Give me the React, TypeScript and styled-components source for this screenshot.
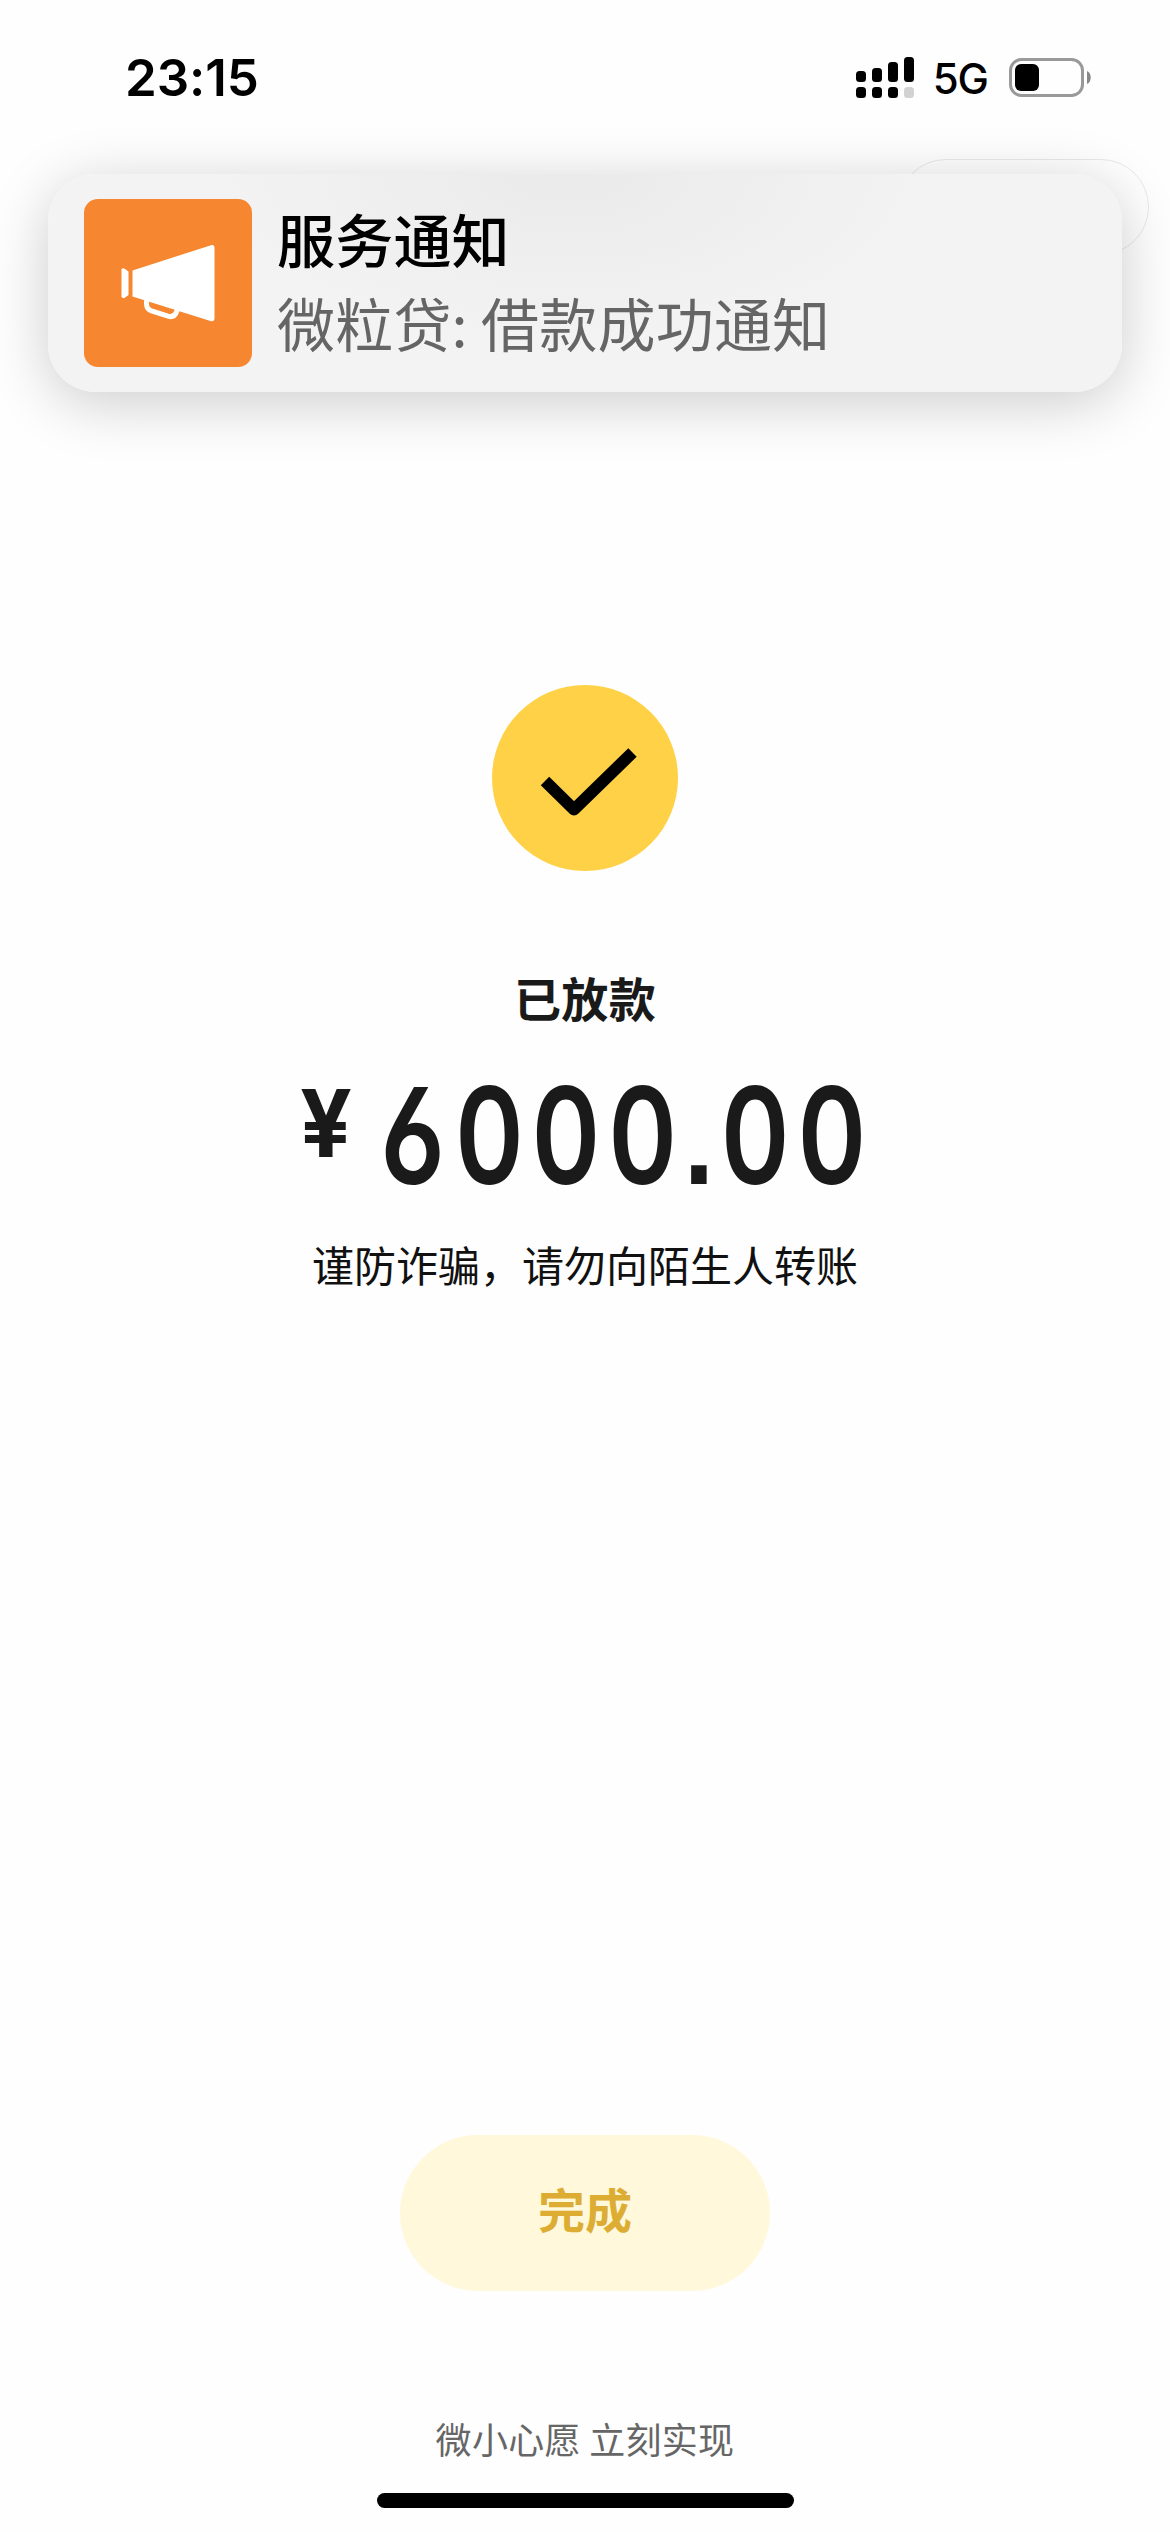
import React from "react";
import styled, { createGlobalStyle } from "styled-components";

const cjk = '"Noto Sans CJK SC", sans-serif';
const latin = 'Inter, "Noto Sans CJK SC", sans-serif';

const GlobalStyle = createGlobalStyle`
  * { box-sizing: border-box; }
  body { margin: 0; background: #fefefe; }
`;

const Screen = styled.main`
  position: relative;
  display: flex;
  flex-direction: column;
  align-items: center;
  width: 1170px;
  height: 2532px;
  overflow: hidden;
  background: #fefefe;
  font-family: ${cjk};
  color: #1a1a1a;
`;

const StatusBar = styled.header`
  display: flex;
  align-items: center;
  justify-content: space-between;
  width: 100%;
  height: 156px;
  padding: 0 78px 0 125px;
  color: #000;
  font-family: ${latin};
`;

const Clock = styled.time`
  font-size: 51px;
  font-weight: 600;
  line-height: 60px;
  letter-spacing: -0.1px;
`;

const StatusIcons = styled.div`
  display: flex;
  align-items: center;
`;

const Network = styled.span`
  margin: 2px 21px 0 19px;
  font-size: 42px;
  font-weight: 500;
  line-height: 50px;
  letter-spacing: -1px;
`;

const NavBar = styled.nav`
  display: flex;
  justify-content: flex-end;
  width: 100%;
  padding: 3px 21px 0 0;
`;

const Capsule = styled.div`
  width: 251px;
  height: 96px;
  border: 1px solid #e9e9e9;
  border-radius: 48px;
`;

const Banner = styled.section`
  position: absolute;
  top: 174px;
  left: 48px;
  display: flex;
  align-items: center;
  gap: 25px;
  width: 1074px;
  height: 218px;
  padding: 0 36px;
  border-radius: 48px;
  background: radial-gradient(ellipse 360px 170px at 520px 0, #eaeaea, #f3f3f3);
  box-shadow: 0 11px 60px rgba(0, 0, 0, 0.2);
`;

const AppIcon = styled.div`
  width: 168px;
  height: 168px;
  border-radius: 14px;
  background: #f6862f;
`;

const BannerText = styled.div`
  display: flex;
  flex-direction: column;
  padding-bottom: 7px;
  font-size: 58px;
  line-height: 84px;
  letter-spacing: 0.2px;
`;

const BannerTitle = styled.strong`
  color: #000;
  font-weight: 500;
`;

const BannerBody = styled.span`
  color: #656565;
  white-space: pre;
`;

const Result = styled.section`
  display: flex;
  flex-direction: column;
  align-items: center;
  padding-top: 430px;
`;

const Badge = styled.div`
  width: 186px;
  height: 186px;
  border-radius: 50%;
  background: #ffd147;
`;

const ResultTitle = styled.h1`
  margin: 91px 0 0;
  font-size: 47px;
  font-weight: 700;
  line-height: 70px;
  letter-spacing: 0.4px;
`;

const Amount = styled.div`
  display: flex;
  align-items: flex-start;
  justify-content: center;
  width: 570px;
  height: 150px;
  margin-top: 28px;
  font-family: ${latin};
`;

const Currency = styled.span`
  width: 78px;
  padding-top: 1px;
  font-size: 93px;
  font-weight: 700;
  line-height: 125px;
  transform: scaleX(0.98);
  transform-origin: 0 0;
`;

const Digits = styled.span`
  width: 492px;
  font-size: 134px;
  font-weight: 600;
  line-height: 150px;
  letter-spacing: 9.1px;
  font-feature-settings: "cv03", "ss01", "ss07", "tnum";
  transform: scaleX(0.8);
  transform-origin: 0 0;
`;

const Warning = styled.p`
  margin: 23px 0 0;
  color: #111;
  font-size: 42px;
  line-height: 62px;
`;

const Footer = styled.footer`
  display: flex;
  flex-direction: column;
  align-items: center;
  margin-top: auto;
`;

const DoneButton = styled.button`
  width: 370px;
  height: 156px;
  padding: 0 0 11px;
  border: 0;
  border-radius: 78px;
  background: #fff8da;
  color: #ddad33;
  font-family: ${cjk};
  font-size: 47px;
  font-weight: 700;
`;

const Slogan = styled.p`
  margin: 120px 0 0;
  color: #666;
  font-size: 36px;
  line-height: 54px;
  letter-spacing: 0.3px;
`;

const HomeIndicator = styled.div`
  width: 417px;
  height: 15px;
  margin: 28px 0 24px;
  border-radius: 8px;
  background: #000;
`;

const signalTops = [14, 11, 5, 0];

const SignalIcon = () => (
  <svg width="58" height="42" viewBox="0 0 58 42">
    {signalTops.map((top, i) => (
      <g key={i}>
        <rect x={i * 16} y={top} width="10" height={25 - top} rx="3.5" />
        <rect x={i * 16} y="30" width="10" height="11" rx="3.5" fill={i === 3 ? "#d2d2d2" : "#000"} />
      </g>
    ))}
  </svg>
);

const BatteryIcon = () => (
  <svg width="83" height="40" viewBox="0 0 83 40">
    <rect x="1.5" y="1.5" width="72" height="36" rx="11" fill="none" stroke="#999" strokeWidth="3" />
    <rect x="6" y="6" width="24" height="27" rx="6" />
    <path d="M78 13c5 2 5 11 0 13z" fill="#888" />
  </svg>
);

const MegaphoneIcon = () => (
  <svg width="168" height="168" viewBox="0 0 168 168" fill="#fff">
    <path d="M37.5 70Q39 68.500 41 70L44.500 72.500V96L41 98.500Q39 100 37.500 98Z" />
    <path d="M48.500 71.500L127 46.200Q130.500 45.500 130.500 49V119Q130.500 123 126.500 122L48.500 97.500Z" />
    <path d="M62.500 99V105Q62.500 110 67.500 111.800L84 117.200Q90 119 92.500 113L95 107" fill="none" stroke="#fff" strokeWidth="5" />
  </svg>
);

const CheckIcon = () => (
  <svg width="186" height="186" viewBox="0 0 186 186">
    <path d="M53 96L82 124.500L140.500 67.500" fill="none" stroke="#000" strokeWidth="12" strokeLinejoin="round" />
  </svg>
);

export default function App() {
  return (
    <>
      <GlobalStyle />
      <Screen>
        <StatusBar>
          <Clock>23:15</Clock>
          <StatusIcons>
            <SignalIcon />
            <Network>5G</Network>
            <BatteryIcon />
          </StatusIcons>
        </StatusBar>
        <NavBar>
          <Capsule />
        </NavBar>
        <Result>
          <Badge>
            <CheckIcon />
          </Badge>
          <ResultTitle>已放款</ResultTitle>
          <Amount>
            <Currency>¥</Currency>
            <Digits>6000.00</Digits>
          </Amount>
          <Warning>谨防诈骗，请勿向陌生人转账</Warning>
        </Result>
        <Footer>
          <DoneButton>完成</DoneButton>
          <Slogan>微小心愿 立刻实现</Slogan>
          <HomeIndicator />
        </Footer>
        <Banner>
          <AppIcon>
            <MegaphoneIcon />
          </AppIcon>
          <BannerText>
            <BannerTitle>服务通知</BannerTitle>
            <BannerBody>微粒贷: 借款成功通知</BannerBody>
          </BannerText>
        </Banner>
      </Screen>
    </>
  );
}
